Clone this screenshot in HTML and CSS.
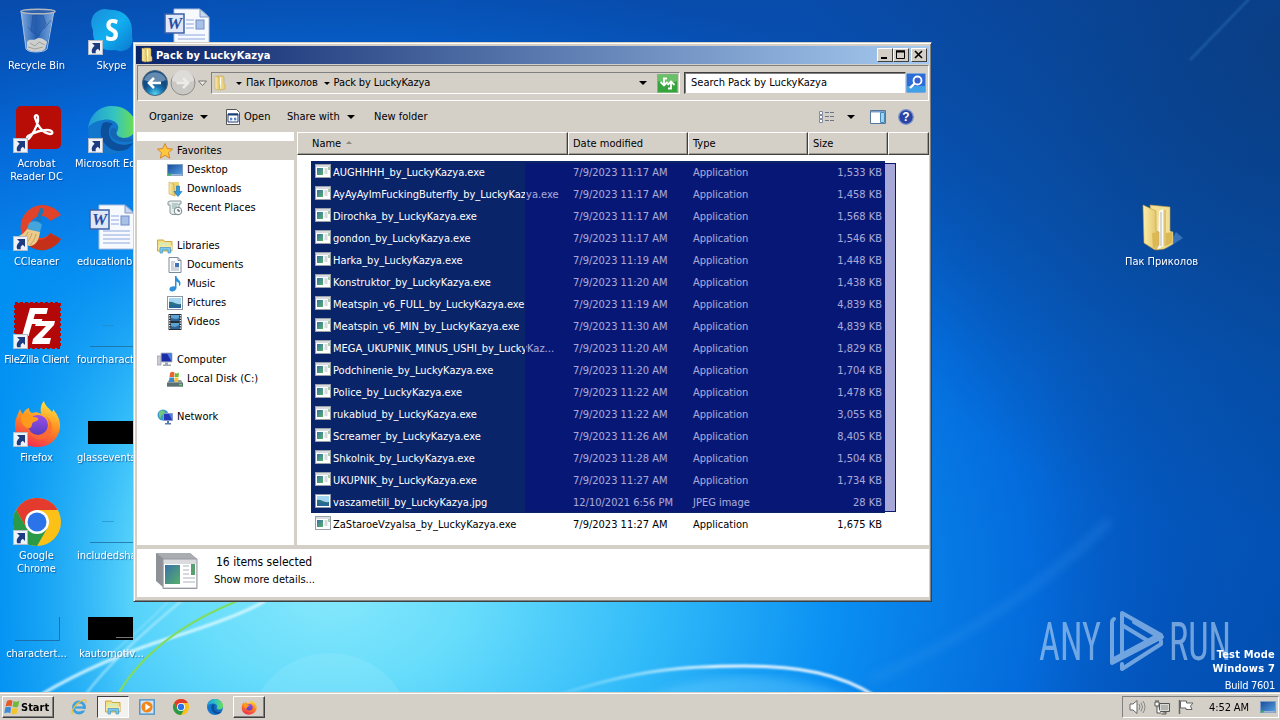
FILE: index.html
```
<!DOCTYPE html>
<html lang="en">
<head>
  <meta charset="UTF-8" />
  <meta name="viewport" content="width=device-width, initial-scale=1.0" />
  <title>Pack by LuckyKazya</title>
  <link rel="stylesheet" href="styles.css">
</head>
<body>
  <svg class="defs" width="0" height="0">
    <defs>
      <linearGradient id="gFolder" x1="0" x2="1"><stop offset="0" stop-color="#fbeeaa"/><stop offset="1" stop-color="#dfbf60"/></linearGradient>
      <linearGradient id="gSkype" x1="0" x2="1" y2="1"><stop offset="0" stop-color="#1a8cd8"/><stop offset=".5" stop-color="#12b0f0"/><stop offset="1" stop-color="#0a78d0"/></linearGradient>
      <linearGradient id="gEdge" x1="0" x2="1"><stop offset="0" stop-color="#1e9ad8"/><stop offset=".55" stop-color="#35c4c0"/><stop offset="1" stop-color="#6ee04a"/></linearGradient>
      <linearGradient id="gFire" x1=".7" x2=".3" y2="1"><stop offset="0" stop-color="#ffe645"/><stop offset=".45" stop-color="#ff9020"/><stop offset="1" stop-color="#f22a52"/></linearGradient>
      <linearGradient id="gGlobe" x1="0" x2="0" y2="1"><stop offset="0" stop-color="#9a50e8"/><stop offset="1" stop-color="#5a3cc0"/></linearGradient>
      <linearGradient id="gApp" x1="0" x2="1" y2="1"><stop offset="0" stop-color="#3a70a8"/><stop offset="1" stop-color="#55b06a"/></linearGradient>
      <linearGradient id="gScreen" x1="0" x2="1" y2="1"><stop offset="0" stop-color="#1a4a98"/><stop offset="1" stop-color="#58a4e4"/></linearGradient>
      <linearGradient id="gBin" x1="0" x2="1"><stop offset="0" stop-color="#a8c8ec" stop-opacity=".75"/><stop offset=".45" stop-color="#3468b4" stop-opacity=".7"/><stop offset="1" stop-color="#b4d2f0" stop-opacity=".7"/></linearGradient>
      <radialGradient id="gBack" cy=".95"><stop offset="0" stop-color="#58d8f4"/><stop offset=".6" stop-color="#1a78b4"/><stop offset="1" stop-color="#124c86"/></radialGradient>
    </defs>

    <symbol id="i-shortcut" viewBox="0 0 15 15">
      <rect x=".5" y=".5" width="14" height="14" fill="#eef2f8" stroke="#b4bcc8"/>
      <path d="M4 3h8v8L9.800 8.800C8 10 7.300 11 7.800 13.200H4.200C3 10.500 4 8 6.600 5.800z" fill="#1d3c80"/>
    </symbol>

    <symbol id="i-bin" viewBox="0 0 48 48">
      <path d="M8 3l5 38c2 4 17 4 20 0l8-38z" fill="url(#gBin)"/>
      <path d="M14 34c2-4 6-1 9-3s7-1 11 3l-2 7c-3 4-15 4-18 0z" fill="#dcdad2" opacity=".9"/>
      <path d="M17 35l5 3 4-4 6 3M15 39l7 2 8-2" stroke="#a49e98" fill="none"/>
      <path d="M20 7l-2 16 7 5 8-12-3-9zM20 24l-5-5M27 27l-5 3M38 12l-7 9" stroke="#18458e" fill="#2458a8" opacity=".55"/>
      <path d="M8 3l5 38c2 4 18 4 21 0l7-38" fill="none" stroke="#a8c0de" stroke-width="1"/>
      <ellipse cx="25" cy="3.500" rx="17" ry="2.300" fill="#2c62b0" stroke="#b4b8bc" stroke-width="1.500"/>
    </symbol>

    <symbol id="i-skype" viewBox="0 0 48 48">
      <path d="M12 2c5-2 9 0 12 0 12 0 20 9 20 20 0 3 0 4 0 6 3 11-7 18-17 14C12 44 4 35 5 22 1 14 4 5 12 2z" fill="url(#gSkype)"/>
      <text x="24" y="33" text-anchor="middle" font-family="Open Sans, sans-serif" font-weight="700" font-size="31" fill="#fff">S</text>
    </symbol>

    <symbol id="i-word" viewBox="0 0 48 48">
      <path d="M11 1h26l9 8v36H11z" fill="#f6f9fe" stroke="#a9bcdc"/>
      <path d="M37 1v8h9z" fill="#c9d8f0" stroke="#7e98c4"/>
      <path d="M23 12h8M23 16h8M23 20h8M15 27h27M15 31h27M15 35h27M15 39h27" stroke="#8ea8dc"/>
      <rect x="33" y="12" width="8" height="9" fill="#a8bfe6" stroke="#6f8cc8"/>
      <rect x="2" y="6" width="19" height="19" fill="#dfe8f8" stroke="#3c60a8" stroke-width="1.500"/>
      <text x="11.500" y="21" text-anchor="middle" font-family="Liberation Serif, serif" font-weight="700" font-style="italic" font-size="17" fill="#2a4ea0">W</text>
    </symbol>

    <symbol id="i-acrobat" viewBox="0 0 48 48">
      <rect x="3" y="0" width="45" height="43" rx="5" fill="#b80c06"/>
      <path d="M15 30c-3 4 0 5 3 0 4-6 8-14 7-19-.6-3-4-2-3 1 2 8 8 15 15 16 4 0 3-4-3-4-6 0-12 2-19 6z" fill="none" stroke="#fff" stroke-width="2.300"/>
    </symbol>

    <symbol id="i-edge" viewBox="0 0 48 48">
      <circle cx="24" cy="24" r="24" fill="#1277cc"/>
      <path d="M0 22C2 8 12 0 24 0c15 0 24 11 24 20 0 8-6 12-13 12-6 0-9-3-6-6 5-8-5-14-14-12C7 15 2 18 0 22z" fill="url(#gEdge)"/>
      <path d="M15 17c-6 10 0 27 16 28 7 0 11-3 14-8-13 5-25-1-24-12 0-4 2-6 4-7-3-2-7-3-10-1z" fill="#0c4f9c"/>
      <path d="M24 22c-6 7 3 14 13 14 5 0 8-2 9-1 0-5-12 0-17-6-1-2-1-5 0-6z" fill="#1466b4"/>
    </symbol>

    <symbol id="i-cc" viewBox="0 0 48 48">
      <path d="M48 11A22 22 0 1 0 48 35L37 29A11 11 0 1 1 37 17z" fill="#e0432a"/>
      <path d="M48 35A22 22 0 0 1 16 42l6-8c6 4 12 1 15-5z" fill="#c43018"/>
      <path d="M27 4l4 1-5 16-4-1z" fill="#1c76b8"/>
      <path d="M16 19c4-3 11-2 13 2l-2 7-13-3z" fill="#44a4dc"/>
      <path d="M14 25l13 3c-1 7-3 13-10 14C9 41 4 38 2 33c6-1 9-4 12-8z" fill="#eccb8a"/>
      <path d="M15 28c-2 5-5 8-9 9M19 29c-1 5-4 9-7 11M23 30c-1 5-3 8-6 11" stroke="#c8a160" fill="none"/>
    </symbol>

    <symbol id="i-fz" viewBox="0 0 48 48">
      <rect x="2" y="1" width="45" height="45" fill="#b40808" stroke="#b40808" stroke-width="2" stroke-dasharray="3 2"/>
      <path d="M17 6h18l-1.500 6H22l-1.500 5h9l-2 5H19l-3.500 12H9z" fill="#fff"/>
      <path d="M24 19h18l-1 4-12 13h9l-1.500 6H19l1-5 13-13H22z" fill="#fff"/>
    </symbol>

    <symbol id="i-firefox" viewBox="0 0 48 48">
      <path d="M31 1c1 5 5 7 8 11 1-1 1-2 1-3 4 5 8 11 7 19-2 12-11 19-23 19C11 47 2 38 2 26c0-7 3-12 5-17 1 3 2 4 3 5 1-3 3-5 6-6 0 3 1 4 3 5 3-1 6-1 9 1-1-5 0-10 3-13z" fill="url(#gFire)"/>
      <circle cx="25" cy="25" r="10" fill="url(#gGlobe)"/>
      <path d="M9 15c4-2 8-1 11 2 4 0 6 1 5 3-2 2-5 1-6 4 0 4-3 5-5 4-5-3-7-8-5-13z" fill="#ff9a1c"/>
      <path d="M14 28c5 10 17 9 21 0 2-5 0-10-3-12 7 3 9 13 4 20-8 7-19 3-22-8z" fill="#ff6a34" opacity=".75"/>
    </symbol>

    <symbol id="i-chrome" viewBox="0 0 48 48">
      <circle cx="24" cy="24" r="24" fill="#fbc116"/>
      <path d="M3.200 12A24 24 0 0 1 44.800 12H24l-10.400 18z" fill="#e33b2e"/>
      <path d="M3.200 12A24 24 0 0 0 24 48L34.400 30 13.600 30z" fill="#2a9a48"/>
      <circle cx="24" cy="24" r="12" fill="#fff"/>
      <circle cx="24" cy="24" r="9.500" fill="#2b73e8"/>
    </symbol>

    <symbol id="i-faint" viewBox="0 0 48 48">
      <path d="M14 23.500h12" stroke="#2b86c0" opacity=".6"/>
      <path d="M2 44.500h46" stroke="#1c6f9e" opacity=".8"/>
    </symbol>
    <symbol id="i-frame" viewBox="0 0 48 48">
      <path d="M2 44.500h44.500V21" fill="none" stroke="#1b6fae"/>
    </symbol>
    <symbol id="i-black" viewBox="0 0 48 48">
      <path d="M0 21h45v23H0z" fill="#000"/>
    </symbol>
    <symbol id="i-black2" viewBox="0 0 48 48">
      <path d="M0 21h45v23H0z" fill="#000"/>
      <path d="M28 41.500h17" stroke="#777"/>
    </symbol>

    <symbol id="i-folderbig" viewBox="0 0 48 48">
      <path d="M28 45l17-11-7-6z" fill="#8cc4f0" opacity=".35"/>
      <path d="M12 1l20 2v24l3 1v12l-9 5-8 1z" fill="#f3df94" stroke="#b99a48" stroke-width=".6"/>
      <path d="M21 7l4-2v37l-5 3z" fill="#fafafa"/>
      <path d="M23 8v34" stroke="#b8b4a8"/>
      <path d="M27 6v36" stroke="#caa648"/>
      <path d="M28 29l6-1v11l-6 3z" fill="#dcb854"/>
      <path d="M5 1l13 6v20l3 1v13l-4 5L6 39z" fill="url(#gFolder)" stroke="#c09d42" stroke-width=".6"/>
      <path d="M14 29l6-1v13l-5 4z" fill="#dcb854"/>
    </symbol>

    <symbol id="i-folder" viewBox="0 0 16 16">
      <path d="M5 1h6l1 1v7l1 1v4l-5 1z" fill="#ecd47c" stroke="#bb9a3c" stroke-width=".5"/>
      <path d="M8.500 2.500V14" stroke="#fff" stroke-width="1.300"/>
      <path d="M3 1l4 1.500V9l1 1v4l-1.500 1L3 14z" fill="url(#gFolder)" stroke="#c9a648" stroke-width=".5"/>
    </symbol>

    <symbol id="i-app" viewBox="0 0 16 14">
      <rect x=".5" y=".5" width="15" height="13" fill="#fff" stroke="#9aa0a8"/>
      <path d="M1 1h14v2H1z" fill="#d8dce2"/>
      <rect x="2" y="4" width="6" height="7" fill="url(#gApp)"/>
      <path d="M9.500 5h3M9.500 7h3M9.500 9h3" stroke="#b0b4bc"/>
      <path d="M14 3v3" stroke="#48a058"/>
    </symbol>
    <symbol id="i-pic" viewBox="0 0 16 14">
      <rect x=".5" y=".5" width="15" height="13" fill="#fff" stroke="#8c98a8"/>
      <path d="M2 2h12v10H2z" fill="#a4d6f2"/>
      <path d="M2 6c4-1 7 3 12 2v4H2z" fill="#2d7284"/>
      <path d="M2 9h12v3H2z" fill="#2562a0" opacity=".7"/>
    </symbol>
    <symbol id="i-star" viewBox="0 0 16 16">
      <path d="M8 .5l2.200 5 5.300.6-4 3.600 1.200 5.500L8 12.300l-4.700 2.900 1.200-5.500-4-3.600 5.300-.6z" fill="#ffc83c" stroke="#d8862a"/>
    </symbol>
    <symbol id="i-desktop" viewBox="0 0 16 16">
      <rect x=".5" y="2.500" width="15" height="11" fill="url(#gScreen)" stroke="#7f9cc4"/>
      <path d="M1 12h14v1.500H1z" fill="#9cb4d0"/><path d="M1 11.500h3v2H1z" fill="#3cae5c"/>
    </symbol>
    <symbol id="i-downloads" viewBox="0 0 16 16">
      <path d="M5 1h7v12l-4 2z" fill="#ecd47c"/><path d="M2 1l5 2v6l1 1v5l-6-2z" fill="url(#gFolder)" stroke="#c9a648" stroke-width=".6"/>
      <path d="M9.500 5h3v5.500h2.500L11 15.500 7 10.500h2.500z" fill="#2f9ae0" stroke="#1a6cb4" stroke-width=".6"/>
    </symbol>
    <symbol id="i-recent" viewBox="0 0 16 16">
      <path d="M1 2l2-1h11v3h-2v10.500H5L3 13V5H1z" fill="#e4ecec" stroke="#8a9898"/>
      <path d="M5 4h6M5 6h5M5 8h4" stroke="#8ba6a8"/><circle cx="11" cy="11" r="3.800" fill="#f4f8f8" stroke="#788888"/><path d="M11 9v2h2" stroke="#345" fill="none"/>
    </symbol>
    <symbol id="i-lib" viewBox="0 0 16 16">
      <path d="M.5 2h6l1 1.500h7.500v9.500H.5z" fill="#f5dc7c" stroke="#cba844"/>
      <path d="M2 4.500h11v3H2z" fill="#d4ecb8"/><path d="M1 7.500h14v4H1z" fill="#f8e8a4"/>
      <path d="M3 15v-5.500h10.500V15h-2.500v-3H5.500v3z" fill="#7ac8ec" stroke="#4496c4" stroke-width=".7"/>
    </symbol>
    <symbol id="i-doc" viewBox="0 0 16 16">
      <path d="M2 .5h9l3 3v12H2z" fill="#fff" stroke="#7d8a9c"/><path d="M11 .5v3h3" fill="none" stroke="#7d8a9c"/>
      <path d="M4 5h4M4 7h3M4 9h3M4 11h8M4 13h8" stroke="#98a8bc"/><rect x="8" y="6" width="4" height="4" fill="#3c74b4"/>
    </symbol>
    <symbol id="i-music" viewBox="0 0 16 16">
      <path d="M8 0h1.500c0 3 4.500 4 4 8-.2 1-.6 2-1.500 2 .5-3-1-4-2.500-4.500v6C9.500 14 7 15.500 5 15.500S2 14 2.500 12.500 5.500 10 8 10.500z" fill="#2f8fd8"/>
    </symbol>
    <symbol id="i-video" viewBox="0 0 16 16">
      <path d="M1.500 0h13v16h-13z" fill="#26303a"/><path d="M4 1h8v6H4zM4 9h8v6H4z" fill="#5ca4d4"/><path d="M4 4l5 1 3-1v3H4zM4 12l4 1 4-2v4H4z" fill="#2f6698"/>
      <path d="M2.700 1v15M13.300 1v15" stroke="#fff" stroke-width="1.200" stroke-dasharray="1.200 1.300"/>
    </symbol>
    <symbol id="i-computer" viewBox="0 0 16 16">
      <path d="M0 4h4v9H0z" fill="#c8ccd4" stroke="#868c98" stroke-width=".6"/><path d="M4 1h11v9H4z" fill="#1c2ca8" stroke="#b8bec8"/><path d="M10 1.500h4.500v8z" fill="#4a80e0"/>
      <path d="M8 10.500h3v2H8zM6 12.500h8v1.500H6z" fill="#a0a6b2"/>
    </symbol>
    <symbol id="i-disk" viewBox="0 0 16 16">
      <path d="M2 9h12l2 3v3.500H0V12z" fill="#8c9a9c"/><path d="M0 12h16v3.500H0z" fill="#5c7074"/><path d="M12 13.500h3" stroke="#4be05a" stroke-width="1.500"/>
      <path d="M3 2q2-2 4.500-.5L7 6H2.500z" fill="#e86430"/><path d="M8 2q2 1 4-.5L11.500 6H7.500z" fill="#70b838"/><path d="M2.500 6.500h4.500V11H2z" fill="#3c88d0"/><path d="M7.500 6.500h4L11 11H7.500z" fill="#f4c430"/>
    </symbol>
    <symbol id="i-network" viewBox="0 0 16 16">
      <circle cx="6" cy="6" r="5.500" fill="#3a9ac8"/><path d="M2 3c3-3 6-1 6 1s-4 1-4 4-2 0-2-2z" fill="#74c87c"/>
      <path d="M6.500 4.500h9v7h-9z" fill="#2438b8" stroke="#8898d0"/><path d="M12 5h3v6z" fill="#4c80e4"/><path d="M10 12h2v2h2v1.500H8V14h2z" fill="#5c78b0"/>
    </symbol>
    <symbol id="i-ie" viewBox="0 0 16 16">
      <circle cx="8" cy="8.500" r="5.500" fill="none" stroke="#3aa0e0" stroke-width="2.800"/><path d="M4 8.500h9.500" stroke="#3aa0e0" stroke-width="2.200"/><path d="M10 10h5v1.500h-5z" fill="#d4d0c8"/>
      <path d="M1.500 15C-.5 12 5 4 11 1.500c4-1.500 4.500 0 3.500 2.500" fill="none" stroke="#ecc03c" stroke-width="1.300"/>
    </symbol>
    <symbol id="i-wmp" viewBox="0 0 16 16">
      <path d="M.8.800h14.400v14.400H.8z" fill="#d0e4f4" stroke="#3b8cc8" stroke-width="1.300"/><circle cx="8" cy="8" r="5.600" fill="#f2861c"/><path d="M6.300 4.500L11.500 8l-5.200 3.500z" fill="#fff"/>
    </symbol>
    <symbol id="i-flag" viewBox="0 0 16 16">
      <path d="M3 2q3-2 5.500-.3L7.500 7.500Q5 6 1.500 7.500z" fill="#e8582c"/><path d="M9.500 2q3 1.500 6-.3l-1.500 6Q11 9 8.500 7.500z" fill="#72b83a"/>
      <path d="M1.300 8.500q3-1.500 5.900 0l-1 5.700Q4 13 .3 14.300z" fill="#3d8ad8"/><path d="M8.300 8.700q3 1.300 5.500 0l-1 5.800q-3 1.500-5.500 0z" fill="#f4c42c"/>
    </symbol>
  </svg>

  <div class="desktop">
    <svg class="wallpaper" width="1280" height="720" viewBox="0 0 1280 720">
      <defs>
        <linearGradient id="wBase" x1="0" x2="0" y2="1"><stop offset="0" stop-color="#084cac"/><stop offset=".5" stop-color="#0561cb"/><stop offset="1" stop-color="#0458c0"/></linearGradient>
        <radialGradient id="wGlow" gradientUnits="userSpaceOnUse" cx="0" cy="0" r="1" gradientTransform="translate(330 590) scale(900 640)">
          <stop offset="0" stop-color="#86e8fc"/><stop offset=".16" stop-color="#66dcfb"/><stop offset=".36" stop-color="#32bbf9"/><stop offset=".56" stop-color="#0a90f3"/><stop offset=".78" stop-color="#0470e2" stop-opacity=".8"/><stop offset="1" stop-color="#0455c0" stop-opacity="0"/>
        </radialGradient>
        <linearGradient id="wLeft" x1="0" x2="1"><stop offset="0" stop-color="#0090f2" stop-opacity=".9"/><stop offset="1" stop-color="#0090f2" stop-opacity="0"/></linearGradient>
        <radialGradient id="wCorner" gradientUnits="userSpaceOnUse" cx="1280" cy="60" r="480"><stop offset="0" stop-color="#0b3c7c" stop-opacity=".8"/><stop offset="1" stop-color="#0b3c7c" stop-opacity="0"/></radialGradient>
        <linearGradient id="wRight" x1="0" x2="1"><stop offset=".3" stop-color="#003c98" stop-opacity="0"/><stop offset="1" stop-color="#003f98" stop-opacity=".4"/></linearGradient>
        <linearGradient id="wBeam" x1="0" x2="1"><stop offset="0" stop-color="#9be4ff" stop-opacity=".25"/><stop offset=".5" stop-color="#fff" stop-opacity=".9"/><stop offset="1" stop-color="#fff" stop-opacity=".9"/></linearGradient>
        <filter id="soft"><feGaussianBlur stdDeviation="1"/></filter>
        <filter id="softer"><feGaussianBlur stdDeviation="5"/></filter>
      </defs>
      <rect width="1280" height="720" fill="url(#wBase)"/>
      <rect width="1280" height="720" fill="url(#wGlow)"/>
      <rect y="250" width="130" height="470" fill="url(#wLeft)"/>
      <rect x="930" width="350" height="720" fill="url(#wRight)"/>
      <rect x="780" width="500" height="560" fill="url(#wCorner)"/>
      <circle cx="330" cy="735" r="82" fill="#b9f2ff" opacity=".16"/>
      <g fill="none" filter="url(#soft)">
        <path d="M42 694Q100 660 170 638T265 601" stroke="#e4fbff" stroke-width="3" opacity=".85"/>
        <path d="M86 694Q115 655 185 598" stroke="#c8f4ff" stroke-width="2" opacity=".7"/>
        <path d="M110 655Q140 630 170 600" stroke="#b8f0ff" stroke-width="1.500" opacity=".5"/>
        <path d="M555 696C640 668 690 666 745 666S840 674 875 696" stroke="url(#wBeam)" stroke-width="3"/>
      </g>
      <path d="M640 700C700 670 790 668 860 700z" fill="#8be0ff" opacity=".3" filter="url(#softer)"/>
      <path d="M118 694Q155 632 245 598" fill="none" stroke="#80dc60" stroke-width="2.200"/>
      <path d="M870 680Q1010 620 1110 520" fill="none" stroke="#3c9cf0" stroke-width="9" opacity=".25" filter="url(#softer)"/>
      <path d="M1190 60L1250 -2" stroke="#4c98e0" stroke-width="2" opacity=".35" filter="url(#soft)"/>
    </svg>

    <div class="icons">
      <div class="icon c1 r1"><svg><use href="#i-bin"/></svg><span>Recycle Bin</span></div>
      <div class="icon c2 r1"><svg><use href="#i-skype"/></svg><svg class="arrow"><use href="#i-shortcut"/></svg><span>Skype</span></div>
      <div class="icon c3 r1"><svg><use href="#i-word"/></svg></div>
      <div class="icon c1 r2"><svg><use href="#i-acrobat"/></svg><svg class="arrow"><use href="#i-shortcut"/></svg><span>Acrobat<br>Reader DC</span></div>
      <div class="icon c2 r2"><svg><use href="#i-edge"/></svg><svg class="arrow"><use href="#i-shortcut"/></svg><span>Microsoft Edge</span></div>
      <div class="icon c1 r3"><svg><use href="#i-cc"/></svg><svg class="arrow"><use href="#i-shortcut"/></svg><span>CCleaner</span></div>
      <div class="icon c2 r3"><svg><use href="#i-word"/></svg><span class="cut">educationb</span></div>
      <div class="icon c1 r4"><svg><use href="#i-fz"/></svg><svg class="arrow"><use href="#i-shortcut"/></svg><span class="tight">FileZilla Client</span></div>
      <div class="icon c2 r4"><svg><use href="#i-faint"/></svg><span class="cut">fourcharact</span></div>
      <div class="icon c1 r5"><svg><use href="#i-firefox"/></svg><svg class="arrow"><use href="#i-shortcut"/></svg><span>Firefox</span></div>
      <div class="icon c2 r5"><svg><use href="#i-black"/></svg><span class="cut">glassevents</span></div>
      <div class="icon c1 r6"><svg><use href="#i-chrome"/></svg><svg class="arrow"><use href="#i-shortcut"/></svg><span>Google<br>Chrome</span></div>
      <div class="icon c2 r6"><svg><use href="#i-faint"/></svg><span class="cut">includedsha</span></div>
      <div class="icon c1 r7"><svg><use href="#i-frame"/></svg><span>charactert...</span></div>
      <div class="icon c2 r7"><svg><use href="#i-black2"/></svg><span>kautomotiv...</span></div>
      <div class="icon c16 r3"><svg><use href="#i-folderbig"/></svg><span>Пак Приколов</span></div>
    </div>

    <svg class="anyrun" width="194" height="64" viewBox="0 0 194 64">
      <g font-family="Roboto, sans-serif" font-weight="400" font-size="53" fill="#b4d4f4">
        <text x="1" y="51" textLength="62" lengthAdjust="spacingAndGlyphs">ANY</text>
        <text x="131" y="51" textLength="62" lengthAdjust="spacingAndGlyphs">RUN</text>
      </g>
      <g fill="none" stroke="#b4d4f4" stroke-width="4" stroke-linejoin="round" stroke-linecap="round">
        <path d="M76 10q-2 1-2 4v37l43-23M84 46V4l39 22v3L96 13"/>
        <path d="M84 46V16l28 17M74 51v3l50-26M84 55v5l39-25v-3"/>
      </g>
    </svg>
    <div class="build"><b>Test Mode</b><b>Windows 7</b><span>Build 7601</span></div>
  </div>

  <div class="window">
    <div class="titlebar">
      <svg class="ico"><use href="#i-folder"/></svg>
      <span class="title">Pack by LuckyKazya</span>
      <div class="caption">
        <button><svg width="12" height="10"><path d="M2 8h6" stroke="#000" stroke-width="2"/></svg></button>
        <button><svg width="12" height="10"><path d="M1.500 1.500h8v7h-8zM1 1h9" fill="none" stroke="#000"/><path d="M1 1.500h9" stroke="#000" stroke-width="2"/></svg></button>
        <button class="close"><svg width="12" height="10"><path d="M2 1l7 7M9 1L2 8" stroke="#000" stroke-width="1.600"/></svg></button>
      </div>
    </div>

    <div class="navbar">
      <svg class="travel" width="67" height="28" viewBox="0 0 67 28">
        <circle cx="15" cy="14" r="12.500" fill="url(#gBack)" stroke="#4a6478"/>
        <path d="M4 11a11.500 11 0 0 1 22 0q-11 5-22 0z" fill="#fff" opacity=".35"/>
        <path d="M14 9l-5 5 5 5M9.500 14h11.500" fill="none" stroke="#fff" stroke-width="2.600"/>
        <circle cx="43" cy="14" r="12" fill="#c9c8c4" stroke="#8c8c8a"/>
        <path d="M32 12a11 11 0 0 1 22 0q-11 4-22 0z" fill="#dddcd8"/>
        <path d="M43 9l5 5-5 5M36.500 14H47" fill="none" stroke="#ecebe8" stroke-width="2.500"/>
        <path d="M58.500 12h8l-4 4.500z" fill="#eee" stroke="#77756f"/>
      </svg>
      <div class="address">
        <svg class="ico"><use href="#i-folder"/></svg>
        <i class="tri"></i><span class="crumb">Пак Приколов</span><i class="tri"></i><span class="crumb">Pack by LuckyKazya</span>
        <i class="tri drop"></i>
        <svg class="refresh" width="21" height="19" viewBox="0 0 21 19">
          <rect x=".5" y=".5" width="20" height="18" fill="#37a33c" stroke="#7cba7a"/><path d="M1 1h19v6q-10 4-19 0z" fill="#8cd486" opacity=".6"/>
          <path d="M10 4.500H7V10M3.500 8L7 11.500 10.500 8M11 14.500h3V9M10.500 11L14 7.500l3.500 3.500" fill="none" stroke="#fff" stroke-width="1.800"/>
        </svg>
      </div>
      <div class="search">Search Pack by LuckyKazya</div>
      <svg class="go" width="20" height="20" viewBox="0 0 20 20">
        <rect x=".5" y=".5" width="19" height="19" rx="1" fill="#2c6cd4" stroke="#7aa8dc"/><path d="M1 13h18v6H1z" fill="#48b8f0" opacity=".7"/>
        <circle cx="11.500" cy="7.500" r="4" fill="#3a62d0" stroke="#fff" stroke-width="1.800"/><path d="M8.500 10.500L4 15" stroke="#fff" stroke-width="2.400"/>
      </svg>
    </div>

    <div class="commands">
      <span class="cmd organize">Organize<i class="tri big"></i></span>
      <span class="cmd open">
        <svg width="14" height="16" viewBox="0 0 14 16"><path d="M.5.500h10l3 3v12H.5z" fill="#fff" stroke="#555"/><path d="M2 5h10v8H2z" fill="#fff" stroke="#1c3c78"/><path d="M2 4.500h10v2H2z" fill="#1c3c78"/><path d="M4 10h2.500M8 10h2.500M5 8.500v3M9 8.500v3" stroke="#2860b0"/></svg>Open</span>
      <span class="cmd share">Share with<i class="tri big"></i></span>
      <span class="cmd">New folder</span>
      <div class="tools">
        <svg width="16" height="14" viewBox="0 0 16 14"><path d="M.5 1.500h3v3h-3zM.5 5.500h3v3h-3zM.5 9.500h3v3h-3z" fill="#fff" stroke="#7e88a0"/><path d="M6 2.500h10M6 6.500h10M6 10.500h10" stroke="#6c7488" stroke-dasharray="4 1"/></svg>
        <i class="tri big"></i>
        <svg class="pane" width="16" height="14" viewBox="0 0 16 14"><path d="M.5.500h15v13H.5z" fill="#fff" stroke="#56789c"/><path d="M1 1h14v1.500H1z" fill="#7aa0c8"/><path d="M10.500 2.500h4v10h-4z" fill="#9cd4f0" stroke="#4888b8"/></svg>
        <svg width="16" height="16" viewBox="0 0 16 16"><circle cx="8" cy="8" r="7.300" fill="#2844a4" stroke="#7c92c8" stroke-width="1.300"/><text x="8" y="12.300" text-anchor="middle" font-family="Liberation Sans, sans-serif" font-weight="700" font-size="12" fill="#fff">?</text></svg>
      </div>
    </div>

    <div class="content">
      <div class="tree">
        <div class="node head current"><svg class="ico"><use href="#i-star"/></svg>Favorites</div>
        <div class="node"><svg class="ico"><use href="#i-desktop"/></svg>Desktop</div>
        <div class="node"><svg class="ico"><use href="#i-downloads"/></svg>Downloads</div>
        <div class="node last"><svg class="ico"><use href="#i-recent"/></svg>Recent Places</div>
        <div class="node head"><svg class="ico"><use href="#i-lib"/></svg>Libraries</div>
        <div class="node"><svg class="ico"><use href="#i-doc"/></svg>Documents</div>
        <div class="node"><svg class="ico"><use href="#i-music"/></svg>Music</div>
        <div class="node"><svg class="ico"><use href="#i-pic"/></svg>Pictures</div>
        <div class="node last"><svg class="ico"><use href="#i-video"/></svg>Videos</div>
        <div class="node head"><svg class="ico"><use href="#i-computer"/></svg>Computer</div>
        <div class="node last"><svg class="ico"><use href="#i-disk"/></svg>Local Disk (C:)</div>
        <div class="node head"><svg class="ico"><use href="#i-network"/></svg>Network</div>
      </div>
      <div class="files">
        <div class="columns">
          <span class="col-name">Name<i class="sort"></i></span><span>Date modified</span><span>Type</span><span>Size</span><span></span>
        </div>
        <div class="rows" id="rows"></div>
      </div>
    </div>

    <div class="details">
      <svg width="44" height="38" viewBox="0 0 44 38">
        <path d="M1 1h34l7 6v29H9l-8-7z" fill="#8e9196"/>
        <path d="M1 1h34l7 6H9z" fill="#a9acb1"/><path d="M8 7h34v29.500H8z" fill="#d9dbdf" stroke="#96999e"/>
        <path d="M9 12h32v23H9z" fill="#fff"/><path d="M10 13h15v19H10z" fill="url(#gApp)"/>
        <path d="M28 14h6M28 18h6M28 22h6M28 26h12M28 30h12" stroke="#c8ccd2" stroke-width="1.500"/><path d="M36 12h4v11h-4z" fill="#58a070"/>
      </svg>
      <div class="summary"><div class="count">16 items selected</div><div>Show more details...</div></div>
    </div>
  </div>

  <div class="taskbar">
    <button class="start"><svg class="ico"><use href="#i-flag"/></svg>Start</button>
    <div class="task"><svg class="ico"><use href="#i-ie"/></svg></div>
    <div class="task active"><svg class="ico"><use href="#i-lib"/></svg></div>
    <div class="task"><svg class="ico"><use href="#i-wmp"/></svg></div>
    <div class="task"><svg class="ico"><use href="#i-chrome"/></svg></div>
    <div class="task"><svg class="ico"><use href="#i-edge"/></svg></div>
    <div class="task running"><svg class="ico"><use href="#i-firefox"/></svg></div>
    <div class="tray">
      <svg width="17" height="16" viewBox="0 0 17 16"><path d="M1 5h3l4-3.500v13L4 11H1z" fill="#fff" stroke="#666"/><path d="M10 5q2 3 0 6M12 3.500q3 4.500 0 9M14 2q4 6 0 12" fill="none" stroke="#888"/></svg>
      <svg width="16" height="16" viewBox="0 0 16 16"><path d="M5.500 4.500h10v8h-10z" fill="#d8d8d4" stroke="#555"/><path d="M7 6h7v5H7z" fill="#b4b4b0"/><path d="M9 13h3v2H7.500" fill="none" stroke="#555"/><path d="M1 3h4v4H1zM2 1v2M4 1v2M3 7v7h4" fill="#fff" stroke="#555"/></svg>
      <svg width="16" height="16" viewBox="0 0 16 16"><path d="M1.500 1v14" stroke="#666" stroke-width="1.500"/><path d="M2.500 2h6v2H15l-2.500 3 1.500 3.500H8V9H2.500z" fill="#fff" stroke="#666"/></svg>
      <span>4:52 AM</span>
      <svg class="ico"><use href="#i-desktop"/></svg>
    </div>
  </div>

  <script>
    const files = [
      ["AUGHHHH_by_LuckyKazya.exe", "7/9/2023 11:17 AM", "1,533 KB"],
      ["AyAyAyImFuckingButerfly_by_LuckyKazya.exe", "7/9/2023 11:17 AM", "1,458 KB"],
      ["Dirochka_by_LuckyKazya.exe", "7/9/2023 11:17 AM", "1,568 KB"],
      ["gondon_by_LuckyKazya.exe", "7/9/2023 11:17 AM", "1,546 KB"],
      ["Harka_by_LuckyKazya.exe", "7/9/2023 11:19 AM", "1,448 KB"],
      ["Konstruktor_by_LuckyKazya.exe", "7/9/2023 11:20 AM", "1,438 KB"],
      ["Meatspin_v6_FULL_by_LuckyKazya.exe", "7/9/2023 11:19 AM", "4,839 KB"],
      ["Meatspin_v6_MIN_by_LuckyKazya.exe", "7/9/2023 11:30 AM", "4,839 KB"],
      ["MEGA_UKUPNIK_MINUS_USHI_by_LuckyKaz...", "7/9/2023 11:20 AM", "1,829 KB"],
      ["Podchinenie_by_LuckyKazya.exe", "7/9/2023 11:20 AM", "1,704 KB"],
      ["Police_by_LuckyKazya.exe", "7/9/2023 11:22 AM", "1,478 KB"],
      ["rukablud_by_LuckyKazya.exe", "7/9/2023 11:22 AM", "3,055 KB"],
      ["Screamer_by_LuckyKazya.exe", "7/9/2023 11:26 AM", "8,405 KB"],
      ["Shkolnik_by_LuckyKazya.exe", "7/9/2023 11:28 AM", "1,504 KB"],
      ["UKUPNIK_by_LuckyKazya.exe", "7/9/2023 11:27 AM", "1,734 KB"],
      ["vaszametili_by_LuckyKazya.jpg", "12/10/2021 6:56 PM", "28 KB"],
      ["ZaStaroeVzyalsa_by_LuckyKazya.exe", "7/9/2023 11:27 AM", "1,675 KB"]
    ];

    const html = files.map(([name, date, size], i) => {
      const jpg = name.endsWith(".jpg");
      return `<div class="row ${i < 16 ? "selected" : ""}">
        <span class="name"><svg><use href="#${jpg ? "i-pic" : "i-app"}"/></svg>${name}</span>
        <span>${date}</span><span>${jpg ? "JPEG image" : "Application"}</span><span class="size">${size}</span>
      </div>`;
    });
    document.getElementById("rows").innerHTML = html.join("") + '<div class="marquee"></div>';
  </script>
</body>
</html>
```
FILE: styles.css
```
* {
  box-sizing: border-box;
}
body {
  margin: 0;
  width: 1280px;
  height: 720px;
  overflow: hidden;
  position: relative;
  font-family: "DejaVu Sans Condensed", "DejaVu Sans", sans-serif;
  font-stretch: condensed;
  font-size: 11px;
  line-height: 13px;
  color: #000;
  background: #0560c8;
}
.defs {
  position: absolute;
}
svg {
  display: block;
  flex: none;
}
button {
  font: inherit;
  padding: 0;
}
.ico {
  width: 16px;
  height: 16px;
}

/* desktop */
.desktop,
.wallpaper {
  position: absolute;
  left: 0;
  top: 0;
  width: 1280px;
  height: 720px;
}
.icons {
  position: relative;
  margin-left: -1px;
  display: grid;
  grid-template-columns: repeat(17, 75px);
  grid-template-rows: repeat(7, 98px);
}
.icon {
  position: relative;
  display: flex;
  flex-direction: column;
  align-items: center;
  padding-top: 8px;
  color: #fff;
  text-align: center;
  white-space: nowrap;
}
.icon > svg {
  width: 48px;
  height: 48px;
}
.icon > .arrow {
  position: absolute;
  left: 14px;
  top: 40px;
  width: 15px;
  height: 15px;
}
.icon span {
  margin-top: 3px;
  text-shadow: 1px 1px 1px rgba(0, 30, 90, 0.5);
}
.icon .cut {
  align-self: flex-start;
  margin-left: 3px;
}
.icon .tight {
  letter-spacing: -0.3px;
}
.c1 { grid-column: 1; }
.c2 { grid-column: 2; }
.c3 { grid-column: 3; }
.c16 { grid-column: 16; }
.r1 { grid-row: 1; }
.r2 { grid-row: 2; }
.r3 { grid-row: 3; }
.r4 { grid-row: 4; }
.r5 { grid-row: 5; }
.r6 { grid-row: 6; }
.r7 { grid-row: 7; }
.anyrun {
  position: absolute;
  left: 1038px;
  top: 609px;
  opacity: 0.62;
}
.build {
  position: absolute;
  right: 5px;
  top: 648px;
  display: flex;
  flex-direction: column;
  align-items: flex-end;
  color: #fff;
  line-height: 15px;
}
.build b {
  line-height: 14px;
  letter-spacing: 0.2px;
}
.build span {
  margin-top: 2px;
  letter-spacing: -0.3px;
}

/* explorer window */
.window {
  position: absolute;
  left: 133px;
  top: 42px;
  width: 799px;
  height: 560px;
  padding: 2px 1px 2px 2px;
  display: flex;
  flex-direction: column;
  background: #d4d0c8;
  border: 1px solid #d4d0c8;
  border-right-color: #404040;
  border-bottom-color: #404040;
  box-shadow: inset 1px 1px #fff, inset -1px -1px #808080;
}
.titlebar {
  height: 18px;
  margin-top: 1px;
  margin-right: 1px;
  padding: 0 2px 0 3px;
  display: flex;
  align-items: center;
  background: linear-gradient(90deg, #0a246a, #a6caf0);
  color: #fff;
  font-weight: bold;
}
.title {
  margin-left: 1px;
  letter-spacing: 0.15px;
}
.caption {
  margin-left: auto;
  display: flex;
}
.caption button {
  width: 16px;
  height: 14px;
  display: flex;
  justify-content: center;
  align-items: center;
  background: #d4d0c8;
  border: 1px solid #fff;
  border-right-color: #404040;
  border-bottom-color: #404040;
}
.caption .close {
  margin-left: 2px;
}
.navbar {
  height: 36px;
  margin: 1px 1px 0 1px;
  padding-left: 2px;
  display: flex;
  align-items: center;
  border: 1px solid #808080;
  border-right-color: #fff;
  border-bottom-color: #fff;
}
.address {
  width: 469px;
  height: 22px;
  margin-left: 4px;
  padding-right: 1px;
  display: flex;
  align-items: center;
  border: 1px solid #808080;
  border-right-color: #fff;
  border-bottom-color: #fff;
}
.crumb {
  margin-top: -2px;
  letter-spacing: -0.12px;
}
.address .tri {
  margin: 0 4px 0 6px;
}
.address .ico + .tri {
  margin-left: 8px;
}
.address .tri.drop {
  margin: 0 10px 0 auto;
}
.tri {
  width: 0;
  height: 0;
  border: 3px solid transparent;
  border-top: 3px solid #000;
  border-bottom: 0;
}
.tri.big,
.tri.drop {
  border-width: 4px 4px 0 4px;
}
.search {
  width: 222px;
  height: 22px;
  margin-left: 4px;
  padding-left: 6px;
  line-height: 20px;
  background: #fff;
  border: 1px solid #404040;
  border-right-color: #d4d0c8;
  border-bottom-color: #d4d0c8;
  box-shadow: inset 1px 1px #808080;
}
.commands {
  height: 31px;
  padding-left: 13px;
  display: flex;
  align-items: center;
}
.cmd {
  display: flex;
  align-items: center;
}
.organize { width: 77px; }
.open { width: 61px; }
.share { width: 87px; }
.open svg {
  margin-right: 4px;
}
.cmd .tri {
  margin-left: 7px;
}
.tools {
  margin-left: auto;
  margin-right: 16px;
  display: flex;
  align-items: center;
}
.tools .tri {
  margin: 0 15px 0 12px;
}
.tools .pane {
  margin-right: 12px;
}
.content {
  height: 413px;
  margin-left: 1px;
  display: flex;
}
.tree {
  width: 157px;
  padding-top: 9px;
  background: #fff;
}
.node {
  height: 19px;
  padding-left: 30px;
  display: flex;
  align-items: center;
  gap: 4px;
}
.node.head {
  padding-left: 20px;
}
.node.current {
  background: #d4d0c8;
}
.node.last {
  margin-bottom: 19px;
}
.files {
  flex: 1;
  margin-left: 3px;
  margin-right: 1px;
  background: #fff;
}
.columns {
  height: 23px;
  display: grid;
  grid-template-columns: 271px 120px 120px 80px 1fr;
  background: #d4d0c8;
}
.columns span {
  display: flex;
  align-items: center;
  padding-left: 4px;
  border: 1px solid #fff;
  border-right-color: #404040;
  border-bottom-color: #404040;
  box-shadow: inset -1px -1px #a09c94;
}
.columns .col-name {
  padding-left: 14px;
}
.sort {
  margin: -3px 0 0 5px;
  border: 3px solid transparent;
  border-top: 0;
  border-bottom: 3px solid #8c8880;
}
.rows {
  position: relative;
  padding-top: 6px;
  padding-left: 14px;
}
.row {
  width: 574px;
  height: 22px;
  display: grid;
  grid-template-columns: 262px 120px 120px 69px;
  align-items: center;
}
.row.selected {
  background: #0a246a;
  color: #fff;
}
.name {
  display: flex;
  align-items: center;
  gap: 2px;
  padding-left: 4px;
  white-space: nowrap;
}
.name svg {
  width: 16px;
  height: 14px;
  margin-top: -2px;
}
.size {
  text-align: right;
}
.marquee {
  position: absolute;
  left: 228px;
  top: 8px;
  width: 371px;
  height: 349px;
  background: rgba(0, 0, 140, 0.34);
  border: 1px solid #0a1870;
}
.details {
  height: 48px;
  margin: 4px 1px 0 1px;
  padding: 3px 0 0 18px;
  display: flex;
  background: #fff;
}
.summary {
  margin-left: 15px;
  padding-top: 1px;
  line-height: 18px;
}
.count {
  margin-left: 2px;
  font-size: 12px;
}

/* taskbar */
.taskbar {
  position: absolute;
  left: 0;
  bottom: 0;
  width: 1280px;
  height: 28px;
  padding: 4px 1px 0 2px;
  display: flex;
  align-items: flex-start;
  background: #d4d0c8;
  box-shadow: inset 0 1px #d4d0c8, inset 0 2px #fff;
}
.start {
  width: 52px;
  height: 22px;
  margin-right: 9px;
  padding-left: 1px;
  display: flex;
  align-items: center;
  gap: 1px;
  font-weight: bold;
  color: #000;
  background: #d4d0c8;
  border: 1px solid #fff;
  border-right-color: #404040;
  border-bottom-color: #404040;
  box-shadow: inset -1px -1px #808080;
}
.task {
  width: 32px;
  height: 22px;
  margin-right: 2px;
  display: flex;
  align-items: center;
  justify-content: center;
}
.task.active {
  background: #f4f2ee;
  border: 1px solid #404040;
  border-right-color: #fff;
  border-bottom-color: #fff;
}
.task.running {
  border: 1px solid #fff;
  border-right-color: #404040;
  border-bottom-color: #404040;
  box-shadow: inset -1px -1px #808080;
}
.tray {
  width: 157px;
  height: 22px;
  margin-left: auto;
  padding-left: 6px;
  display: flex;
  align-items: center;
  gap: 8px;
  border: 1px solid #808080;
  border-right-color: #fff;
  border-bottom-color: #fff;
}
.tray span {
  width: 43px;
  margin-left: 7px;
  white-space: nowrap;
  letter-spacing: -0.1px;
}
```
